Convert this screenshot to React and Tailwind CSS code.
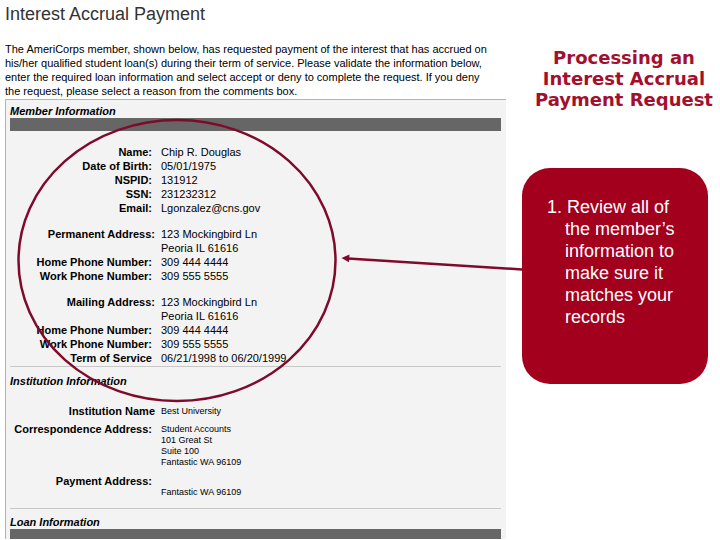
import React from "react";

const personal = [
  { label: "Name:", value: "Chip R. Douglas" },
  { label: "Date of Birth:", value: "05/01/1975" },
  { label: "NSPID:", value: "131912" },
  { label: "SSN:", value: "231232312" },
  { label: "Email:", value: "Lgonzalez@cns.gov" },
];

const permanent = [
  { label: "Permanent Address:", value: "123 Mockingbird Ln", wide: true },
  { label: "", value: "Peoria IL 61616" },
  { label: "Home Phone Number:", value: "309 444 4444" },
  { label: "Work Phone Number:", value: "309 555 5555" },
];

const mailing = [
  { label: "Mailing Address:", value: "123 Mockingbird Ln", wide: true },
  { label: "", value: "Peoria IL 61616" },
  { label: "Home Phone Number:", value: "309 444 4444" },
  { label: "Work Phone Number:", value: "309 555 5555" },
  { label: "Term of Service", value: "06/21/1998 to 06/20/1999" },
];

const FieldTable = ({ rows }) => (
  <table className="text-[11px] leading-[14px]">
    <tbody>
      {rows.map((row, i) => (
        <tr key={i}>
          <th
            scope="row"
            className={`w-[151px] p-0 text-right font-bold whitespace-nowrap ${
              row.wide ? "pr-[6px]" : "pr-[9px]"
            }`}
          >
            {row.label}
          </th>
          <td className="p-0 whitespace-nowrap">{row.value}</td>
        </tr>
      ))}
    </tbody>
  </table>
);

const SectionTitle = ({ children }) => (
  <h2 className="text-[11px] leading-[14px] font-bold italic">{children}</h2>
);

const App = () => {
  return (
    <div className="relative flex items-start overflow-hidden bg-white font-['Liberation_Sans',Arial,sans-serif] text-black">
      {/* Payment form */}
      <main className="min-w-0 flex-1 pl-[5px]">
        <h1 className="pt-[3px] text-[18px] leading-[22px] text-[#333]">
          Interest Accrual Payment
        </h1>
        <p className="mt-[17px] text-[11px] leading-[14px] whitespace-nowrap">
          The AmeriCorps member, shown below, has requested payment of the
          interest that has accrued on
          <br />
          his/her qualified student loan(s) during their term of service. Please
          validate the information below,
          <br />
          enter the required loan information and select accept or deny to
          complete the request. If you deny
          <br />
          the request, please select a reason from the comments box.
        </p>

        <div className="mt-px border-t border-l border-[#b4b4b4] bg-[#f3f3f3] pr-[5px] pl-1">
          <section className="pt-1">
            <SectionTitle>Member Information</SectionTitle>
            <div className="h-[13px] bg-[#666]" />
            <div className="flex flex-col gap-3 pt-[14px] pb-px">
              <FieldTable rows={personal} />
              <FieldTable rows={permanent} />
              <FieldTable rows={mailing} />
            </div>
          </section>

          <section className="border-t border-[#c8c8c8] pt-[7px]">
            <SectionTitle>Institution Information</SectionTitle>
            <table className="mt-3 text-[11px] leading-[14px]">
              <tbody className="align-top">
                <tr>
                  <th
                    scope="row"
                    className="w-[151px] p-0 pt-1 pr-[6px] text-right font-bold whitespace-nowrap"
                  >
                    Institution Name
                  </th>
                  <td className="p-0 pt-1 text-[9px]">Best University</td>
                </tr>
                <tr>
                  <th
                    scope="row"
                    className="p-0 pt-1 pr-[9px] text-right font-bold whitespace-nowrap"
                  >
                    Correspondence Address:
                  </th>
                  <td className="p-0 pt-[6px] text-[9px] leading-[11px]">
                    Student Accounts
                    <br />
                    101 Great St
                    <br />
                    Suite 100
                    <br />
                    Fantastic WA 96109
                  </td>
                </tr>
                <tr>
                  <th
                    scope="row"
                    className="p-0 pt-[6px] pr-[9px] text-right font-bold whitespace-nowrap"
                  >
                    Payment Address:
                  </th>
                  <td className="p-0 pt-[19px] text-[9px] leading-[11px]">
                    Fantastic WA 96109
                  </td>
                </tr>
              </tbody>
            </table>
          </section>

          <section className="mt-[10px] border-t border-[#c8c8c8] pt-[6px]">
            <SectionTitle>Loan Information</SectionTitle>
            <div className="h-[10px] bg-[#666]" />
          </section>
        </div>
      </main>

      {/* Instructions */}
      <aside className="w-[214px] shrink-0 pt-[47px] pr-3 pl-4">
        <h2 className="-mr-3 pl-[6px] text-center font-['DejaVu_Sans',Verdana,sans-serif] text-[18px] leading-[21px] font-bold whitespace-nowrap text-[#a3102e]">
          Processing an
          <br />
          Interest Accrual
          <br />
          Payment Request
        </h2>
        <div className="mt-[58px] rounded-[28px] bg-[#a3001e] px-[25px] pt-7 pb-[56px] text-white">
          <ol className="list-none text-[18px] leading-[22px]">
            <li className="pl-[18px] -indent-[18px] whitespace-nowrap">
              1. Review all of
              <br />
              <span className="inline-block indent-0">
                the member’s
                <br />
                information to
                <br />
                make sure it
                <br />
                matches your
                <br />
                records
              </span>
            </li>
          </ol>
        </div>
      </aside>

      {/* Callout ring and arrow drawn over the form */}
      <svg
        className="pointer-events-none absolute top-0 left-0"
        width="522"
        height="540"
        viewBox="0 0 522 540"
        fill="none"
        aria-hidden="true"
      >
        <ellipse
          cx="177"
          cy="260.5"
          rx="158.5"
          ry="140.5"
          stroke="#7f0a2b"
          strokeWidth="2.5"
        />
        <path d="M522 269.5 348 258.5" stroke="#7f0a2b" strokeWidth="2.5" />
        <path d="M341.5 258 349.5 254.5 349 262.3Z" fill="#7f0a2b" />
      </svg>
    </div>
  );
};

export default App;
